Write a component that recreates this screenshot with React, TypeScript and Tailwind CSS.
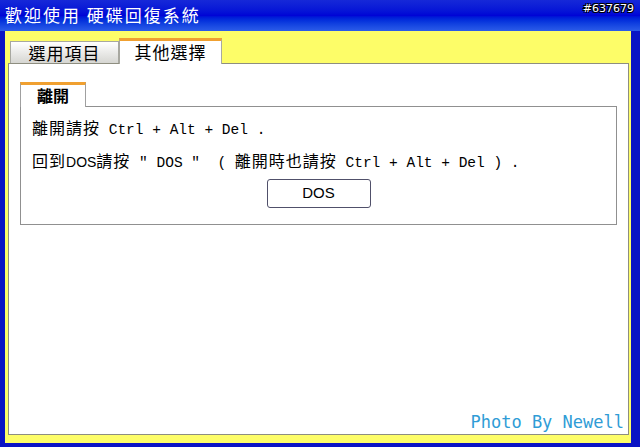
const cjk = { fontFamily: '"Noto Sans CJK TC", "Noto Sans CJK SC", sans-serif' };
const mono = { fontFamily: '"Liberation Mono", "DejaVu Sans Mono", monospace' };

const Mono = ({ children }: { children: string }) => (
  <span className="whitespace-pre text-[14.5px] tracking-normal" style={mono}>
    {children}
  </span>
);

const App = () => (
  <div className="w-[640px] h-[447px] flex flex-col bg-[#0a14c4] overflow-hidden" style={cjk}>
    {/* title bar */}
    <div className="h-[31px] flex items-start justify-between bg-gradient-to-b from-[#1628d8] via-[#0004d6] to-[#2c5ce8] pl-[5px] pr-[6px]">
      <span className="text-white text-[17px] leading-[30px] tracking-[2px]">歡迎使用 硬碟回復系統</span>
      <span
        className="text-white text-[11px] leading-[14px] mt-[2px]"
        style={{ fontFamily: '"DejaVu Sans", sans-serif', textShadow: "1px 1px 0 #000, -1px -1px 0 #000, 1px -1px 0 #000, -1px 1px 0 #000" }}
      >
        #637679
      </span>
    </div>

    {/* body */}
    <div className="flex-1 flex pl-[5px] pr-[9px] pb-[4px]">
      <div className="flex-1 flex flex-col bg-[#fdfd68] pl-[3px] pr-[2px] pt-[7px] pb-[8px]">
        {/* tabs */}
        <div className="flex items-end pl-[2px] h-[26px] -mb-[1px] relative z-10">
          <div className="w-[109px] h-[22px] mb-[1px] border border-b-0 border-[#a8a8a0] bg-gradient-to-b from-white to-[#d6d6d2] text-[17px] leading-[22px] tracking-[1px] text-black text-center">
            選用項目
          </div>
          <div className="w-[103px] h-[26px] border-x border-[#a8a8a0] border-t-[3px] border-t-[#f0a030] bg-white text-[17px] leading-[22px] tracking-[1px] text-black text-center">
            其他選擇
          </div>
        </div>

        {/* panel */}
        <div className="flex-1 bg-white border border-[#8e8e80] px-[11px] pt-[18px] flex flex-col">
          <div className="w-[66px] h-[25px] -mb-[1px] relative z-10 bg-white border-x border-[#a0a0a0] border-t-[3px] border-t-[#f0a030] text-[16px] leading-[20px] font-bold text-center">
            離開
          </div>
          <div className="border border-[#909090] pl-[11px] pt-[10px] pb-[16px] flex flex-col">
            <div className="h-[20px] text-[16px] leading-[20px] text-black tracking-[1px] whitespace-pre">
              離開請按
              <Mono>{" Ctrl + Alt + Del ."}</Mono>
            </div>
            <div className="h-[20px] mt-[13px] text-[16px] leading-[20px] text-black tracking-[1px] whitespace-pre">
              回到<span className="text-[14px] tracking-normal" style={{ fontFamily: '"Liberation Sans", sans-serif' }}>DOS</span>請按
              <Mono>{' " DOS "  ( '}</Mono>
              離開時也請按
              <Mono>{" Ctrl + Alt + Del ) ."}</Mono>
            </div>
            <div className="flex justify-center mt-[9px] pr-[11px]">
              <button
                className="w-[104px] h-[29px] border border-[#50506a] rounded-[3px] bg-white text-[15px] text-black"
                style={{ fontFamily: '"Liberation Sans", sans-serif' }}
              >
                DOS
              </button>
            </div>
          </div>
          <div className="flex-1 flex items-end justify-end pb-[1px] -mr-[7px]">
            <span className="text-[17px] leading-[22px] text-[#2f9cd6]" style={{ fontFamily: '"DejaVu Sans Mono", monospace' }}>
              Photo By Newell
            </span>
          </div>
        </div>
      </div>
    </div>
  </div>
);

export default App;
